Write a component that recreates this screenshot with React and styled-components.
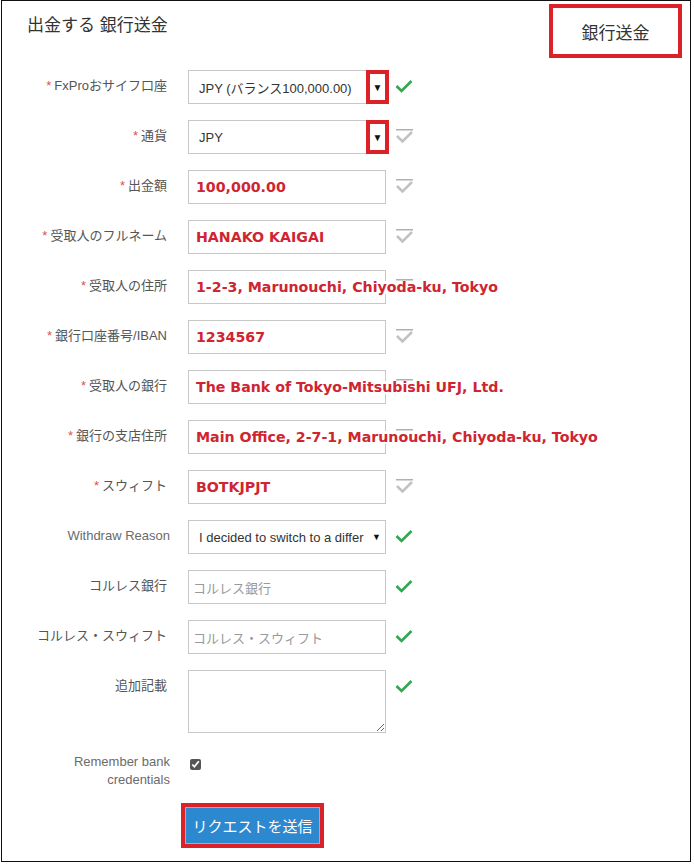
import styled, { createGlobalStyle } from 'styled-components';

const GlobalStyle = createGlobalStyle`
    body {
        margin: 0;
        background: #fff;
        font-family: "Liberation Sans", "Noto Sans CJK JP", sans-serif;
    }
`;

const Frame = styled.div`
    box-sizing: border-box;
    width: 690px;
    height: 862px;
    margin-left: 1px;
    border: 1px solid #111;
    background: #fff;
`;

const Header = styled.div`
    display: flex;
    justify-content: space-between;
    align-items: flex-start;
`;

const Title = styled.h2`
    margin: 15px 0 0 25px;
    font-size: 17px;
    line-height: 20px;
    font-weight: normal;
    color: #333;
`;

const TabBox = styled.div`
    box-sizing: border-box;
    width: 133px;
    height: 54px;
    margin: 3px 8px 0 0;
    border: 4px solid #dc2229;
    display: flex;
    align-items: center;
    justify-content: center;
    font-size: 17px;
    color: #333;
`;

const Form = styled.div`
    padding-top: 12px;
`;

const Row = styled.div`
    display: flex;
    align-items: flex-start;
    margin-bottom: ${p => (p.$tight ? '14px' : '16px')};
`;

const Label = styled.div`
    box-sizing: border-box;
    width: 168px;
    padding-top: ${p => (p.$top ? p.$top : '7px')};
    padding-right: ${p => (p.$muted ? '0' : '3px')};
    text-align: right;
    font-size: 13px;
    line-height: 18px;
    color: ${p => (p.$muted ? '#6b6b6b' : '#555')};
`;

const Star = styled.span`
    color: #d9534f;
    margin-right: 3px;
`;

const Field = styled.div`
    position: relative;
    box-sizing: border-box;
    width: 198px;
    height: 34px;
    margin-left: 18px;
    border: 1px solid #c8c8c8;
    background: #fff;
    display: flex;
    align-items: center;
    padding-left: ${p => (p.$value ? '7px' : '10px')};
    font-size: 13px;
    color: #333;
    white-space: nowrap;
`;

const Value = styled.span`
    position: relative;
    z-index: 1;
    background: #fff;
    padding-right: 4px;
    line-height: 13px;
    font-family: "DejaVu Sans", Verdana, sans-serif;
    font-weight: bold;
    font-size: 14.2px;
    color: #cf2530;
`;

const Placeholder = styled.span`
    color: #999;
    margin-left: -6px;
`;

const Arrow = styled.span`
    position: absolute;
    right: 4px;
    top: 50%;
    transform: translateY(-50%);
    font-size: 9px;
    color: #111;
`;

const ArrowMark = styled.span`
    position: absolute;
    right: -4px;
    top: -1px;
    box-sizing: border-box;
    width: 23px;
    height: 34px;
    border: 4px solid #dc2229;
    display: flex;
    align-items: center;
    justify-content: center;
    font-size: 10px;
    color: #111;
`;

const TextArea = styled.textarea`
    box-sizing: border-box;
    width: 198px;
    height: 63px;
    margin: 0 0 0 18px;
    border: 1px solid #c8c8c8;
    resize: both;
    font-family: inherit;
`;

const CheckSlot = styled.div`
    margin: 9px 0 0 9px;
    width: 19px;
    height: 16px;
`;

const Box = styled.input`
    margin: 10px 0 0 20px;
    width: 11px;
    height: 11px;
    accent-color: #555;
`;

const SubmitFrame = styled.div`
    box-sizing: border-box;
    margin-left: 179px;
    width: 143px;
    height: 45px;
    border: 4px solid #dc2229;
`;

const Submit = styled.button`
    box-sizing: border-box;
    width: 100%;
    height: 100%;
    border: 1px solid #7fb6e2;
    background: #2c88cf;
    color: #fff;
    font-family: inherit;
    font-size: 15px;
    cursor: pointer;
`;

function Check({ off }) {
    if (off) {
        return (
            <svg width="19" height="16" viewBox="0 0 19 16">
                <line x1="1" y1="0.8" x2="18" y2="0.8" stroke="#9d9d9d" strokeWidth="1.2" />
                <polyline points="2,7 7.5,12.5 17,3" fill="none" stroke="#c2c2c2" strokeWidth="2.6" />
            </svg>
        );
    }
    return (
        <svg width="19" height="16" viewBox="0 0 19 16">
            <polyline points="1.5,7 6.5,12 16.5,2" fill="none" stroke="#2fa84f" strokeWidth="2.6" />
        </svg>
    );
}

const rows = [
    { label: 'FxProおサイフ口座', req: true, text: 'JPY (バランス100,000.00)', mark: true },
    { label: '通貨', req: true, text: 'JPY', mark: true, off: true },
    { label: '出金額', req: true, value: '100,000.00', off: true },
    { label: '受取人のフルネーム', req: true, value: 'HANAKO KAIGAI', off: true },
    { label: '受取人の住所', req: true, value: '1-2-3, Marunouchi, Chiyoda-ku, Tokyo', off: true },
    { label: '銀行口座番号/IBAN', req: true, value: '1234567', off: true },
    { label: '受取人の銀行', req: true, value: 'The Bank of Tokyo-Mitsubishi UFJ, Ltd.', off: true },
    { label: '銀行の支店住所', req: true, value: 'Main Office, 2-7-1, Marunouchi, Chiyoda-ku, Tokyo', off: true },
    { label: 'スウィフト', req: true, value: 'BOTKJPJT', off: true },
    { label: 'Withdraw Reason', muted: true, text: 'I decided to switch to a differ', arrow: true },
    { label: 'コルレス銀行', hint: 'コルレス銀行' },
    { label: 'コルレス・スウィフト', hint: 'コルレス・スウィフト' },
];

function App() {
    return (
        <Frame>
            <GlobalStyle />
            <Header>
                <Title>出金する 銀行送金</Title>
                <TabBox>銀行送金</TabBox>
            </Header>

            <Form>
                {rows.map(row => (
                    <Row key={row.label}>
                        <Label $muted={row.muted}>
                            {row.req && <Star>*</Star>}
                            {row.label}
                        </Label>
                        <Field $value={!!row.value}>
                            {row.text}
                            {row.value && <Value>{row.value}</Value>}
                            {row.hint && <Placeholder>{row.hint}</Placeholder>}
                            {row.arrow && <Arrow>▼</Arrow>}
                            {row.mark && <ArrowMark>▼</ArrowMark>}
                        </Field>
                        <CheckSlot>
                            <Check off={row.off} />
                        </CheckSlot>
                    </Row>
                ))}

                <Row>
                    <Label>追加記載</Label>
                    <TextArea />
                    <CheckSlot>
                        <Check />
                    </CheckSlot>
                </Row>

                <Row $tight>
                    <Label $muted $top="4px">
                        Remember bank
                        <br />
                        credentials
                    </Label>
                    <Box type="checkbox" defaultChecked />
                </Row>

                <SubmitFrame>
                    <Submit>リクエストを送信</Submit>
                </SubmitFrame>
            </Form>
        </Frame>
    );
}

export default App;
